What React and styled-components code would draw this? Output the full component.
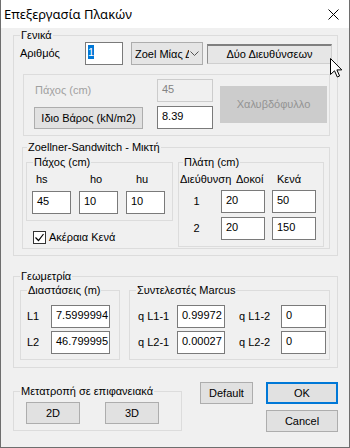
import React from 'react';
import styled, { createGlobalStyle } from 'styled-components';

const Global = createGlobalStyle`
  html, body { margin: 0; padding: 0; background: #fff; }
  * { box-sizing: border-box; }
`;

const Window = styled.div`
  position: relative;
  width: 350px;
  height: 448px;
  border: 1px solid #6e6e6e;
  border-top: none;
  background: #f0f0f0;
  display: flex;
  flex-direction: column;
  font: 11px 'Liberation Sans', Arial, sans-serif;
  color: #000;
`;

const TitleBar = styled.div`
  height: 28px;
  flex: none;
  background: #fff;
  display: flex;
  align-items: center;
  justify-content: space-between;
  padding: 0 10px 0 3px;
`;

const Title = styled.span`
  font: 13px 'Noto Sans', 'Open Sans', sans-serif;
`;

const Body = styled.div`
  display: flex;
  flex-direction: column;
  padding: 0 11px 0 12px;
`;

const Group = styled.fieldset`
  margin: ${(p) => p.$m || '0'};
  padding: ${(p) => p.$pad || '0'};
  min-width: 0;
  border: 1px solid #dcdcdc;
  width: ${(p) => (p.$w ? `${p.$w}px` : 'auto')};
`;

const Legend = styled.legend`
  margin-left: ${(p) => p.$ml ?? 6}px;
  padding: 0 1px;
  line-height: 13px;
  height: 13px;
  white-space: nowrap;
`;

const Frame = styled.div`
  margin: 9px 7px 0 9px;
  border: 1px solid #dcdcdc;
  padding: 4px 2px 6px 10px;
  display: flex;
  align-items: center;
  gap: 7px;
`;

const Row = styled.div`
  display: flex;
  align-items: center;
  gap: ${(p) => p.$gap || 0}px;
  padding-left: ${(p) => p.$pl || 0}px;
  height: ${(p) => p.$h || 23}px;
`;

const Label = styled.span`
  display: inline-block;
  width: ${(p) => (p.$w ? `${p.$w}px` : 'auto')};
  padding-left: ${(p) => p.$pl || 0}px;
  color: ${(p) => (p.$disabled ? '#a0a0a0' : '#000')};
  line-height: 13px;
  white-space: nowrap;
  text-align: ${(p) => p.$align || 'left'};
`;

const TextBox = styled.div`
  flex: none;
  width: ${(p) => p.$w}px;
  height: 23px;
  border: 1px solid ${(p) => (p.$disabled ? '#cccccc' : '#7a7a7a')};
  background: ${(p) => (p.$disabled ? '#f0f0f0' : '#fff')};
  color: ${(p) => (p.$disabled ? '#838383' : '#000')};
  padding: 3px 0 0 ${(p) => p.$pl ?? 4}px;
  line-height: 13px;
  white-space: nowrap;
  overflow: hidden;
`;

const Selected = styled.span`
  background: #0078d7;
  color: #fff;
  padding: 1px 0;
`;

const Button = styled.button`
  flex: none;
  width: ${(p) => p.$w}px;
  height: ${(p) => p.$h || 22}px;
  margin: 0;
  padding: 0;
  font: inherit;
  color: #000;
  background: #e1e1e1;
  border: 1px solid #adadad;
  border-radius: 0;
`;

const DefaultButton = styled(Button)`
  border: 2px solid #0078d7;
`;

const DisabledButton = styled(Button)`
  background: #cccccc;
  border-color: #cccccc;
  color: #939393;
`;

const ToggleButton = styled(Button)`
  background: #e6e6e6;
  border: 1px solid #cfcfcf;
  border-top: 2px solid #7f7f7f;
  border-left-color: #8f8f8f;
`;

const Combo = styled.div`
  flex: none;
  width: 72px;
  height: 23px;
  background: #e5e5e5;
  border: 1px solid #adadad;
  display: flex;
  align-items: center;
  padding: 0 3px 0 3px;
  gap: 1px;
  overflow: hidden;
  span {
    flex: 1;
    min-width: 0;
    white-space: nowrap;
    overflow: hidden;
  }
  svg {
    flex: none;
  }
`;

const SteelGrid = styled.div`
  display: grid;
  grid-template-columns: 123px 56px;
  grid-template-rows: 23px 23px;
  row-gap: 4px;
  align-items: center;
`;

const ZoellnerRow = styled.div`
  display: flex;
  align-items: flex-start;
  gap: 5px;
  padding: 2px 3px 1px 3px;
`;

const Column = styled.div`
  display: flex;
  flex-direction: column;
`;

const ThicknessGrid = styled.div`
  display: grid;
  grid-template-columns: repeat(3, 39px);
  grid-template-rows: 13px 23px;
  column-gap: 8px;
  row-gap: 5px;
  padding: 4px 0 6px 5px;
`;

const WidthGrid = styled.div`
  display: grid;
  grid-template-columns: 35px 44px 44px;
  grid-template-rows: 13px 23px 23px;
  column-gap: 7px;
  row-gap: 4px;
  align-items: center;
  padding: 4px 0 6px 0;
`;

const Check = styled.label`
  display: flex;
  align-items: center;
  gap: 3px;
  margin: 10px 0 0 7px;
  line-height: 13px;
`;

const Box = styled.span`
  width: 13px;
  height: 13px;
  border: 1px solid #333;
  background: #fff;
  display: flex;
`;

const GeoRow = styled.div`
  display: flex;
  align-items: flex-start;
  gap: 9px;
  padding: 1px 0 7px 6px;
`;

const PairGrid = styled.div`
  display: grid;
  grid-template-columns: ${(p) => p.$cols};
  grid-template-rows: 23px 23px;
  row-gap: 3px;
  align-items: center;
  padding: ${(p) => p.$pad};
`;

const BottomRow = styled.div`
  display: flex;
  align-items: flex-start;
  margin-top: 14px;
`;

const ConvertButtons = styled.div`
  display: flex;
  gap: 25px;
  padding: 4px 0 6px 12px;
`;

const ActionStack = styled.div`
  display: flex;
  flex-direction: column;
  gap: 6px;
`;

const Cursor = styled.svg`
  position: absolute;
  left: 329px;
  top: 58px;
`;

const Chevron = () => (
  <svg width="9" height="6" viewBox="0 0 9 6">
    <path d="M0.5 0.5 L4.5 4.5 L8.5 0.5" fill="none" stroke="#555" />
  </svg>
);

const App = () => (
  <>
    <Global />
    <Window>
      <TitleBar>
        <Title>Επεξεργασία Πλακών</Title>
        <svg width="11" height="11" viewBox="0 0 11 11">
          <path d="M0.5 0.5 L10.5 10.5 M10.5 0.5 L0.5 10.5" stroke="#000" strokeWidth="1" />
        </svg>
      </TitleBar>

      <Body>
        <Group $m="1px 0 0 0" $pad="0 0 6px 0">
          <Legend $ml={6}>Γενικά</Legend>
          <Row $pl={6}>
            <Label $w={65}>Αριθμός</Label>
            <TextBox $w={38} $pl={2}>
              <Selected>1</Selected>
            </TextBox>
            <Combo style={{ marginLeft: 8 }}>
              <span>Zoel Μίας Δ</span>
              <Chevron />
            </Combo>
            <ToggleButton $w={125} $h={20} style={{ marginLeft: 4 }}>
              Δύο Διευθύνσεων
            </ToggleButton>
          </Row>

          <Frame>
            <SteelGrid>
              <Label $pl={1} $disabled>Πάχος (cm)</Label>
              <TextBox $w={56} $disabled>45</TextBox>
              <Button $w={109}>Ιδιο Βάρος (kN/m2)</Button>
              <TextBox $w={56}>8.39</TextBox>
            </SteelGrid>
            <DisabledButton $w={107} $h={37}>Χαλυβδόφυλλο</DisabledButton>
          </Frame>

          <Group $m="5px 7px 0 8px">
            <Legend $ml={4}>Zoellner-Sandwitch - Μικτή</Legend>
            <ZoellnerRow>
              <Column>
                <Group $w={147}>
                  <Legend $ml={6}>Πάχος (cm)</Legend>
                  <ThicknessGrid>
                    <Label $pl={4}>hs</Label>
                    <Label $pl={11}>ho</Label>
                    <Label $pl={10}>hu</Label>
                    <TextBox $w={39}>45</TextBox>
                    <TextBox $w={39}>10</TextBox>
                    <TextBox $w={39}>10</TextBox>
                  </ThicknessGrid>
                </Group>
                <Check>
                  <Box>
                    <svg width="11" height="11" viewBox="0 0 11 11">
                      <path d="M1.5 5.5 L4.5 8.5 L9.5 2" fill="none" stroke="#000" strokeWidth="1.2" />
                    </svg>
                  </Box>
                  Ακέραια Κενά
                </Check>
              </Column>
              <Group $w={146}>
                <Legend $ml={4}>Πλάτη (cm)</Legend>
                <WidthGrid>
                  <Label $pl={1}>Διεύθυνση</Label>
                  <Label $pl={15}>Δοκοί</Label>
                  <Label $pl={5}>Κενά</Label>
                  <Label $align="center">1</Label>
                  <TextBox $w={44}>20</TextBox>
                  <TextBox $w={44}>50</TextBox>
                  <Label $align="center">2</Label>
                  <TextBox $w={44}>20</TextBox>
                  <TextBox $w={44}>150</TextBox>
                </WidthGrid>
              </Group>
            </ZoellnerRow>
          </Group>
        </Group>

        <Group $m="14px 0 0 0">
          <Legend $ml={6}>Γεωμετρία</Legend>
          <GeoRow>
            <Group $w={100}>
              <Legend $ml={6}>Διαστάσεις (m)</Legend>
              <PairGrid $cols="24px 59px" $pad="8px 0 5px 6px">
                <Label>L1</Label>
                <TextBox $w={59}>7.5999994</TextBox>
                <Label>L2</Label>
                <TextBox $w={59}>46.799995</TextBox>
              </PairGrid>
            </Group>
            <Group $w={201}>
              <Legend $ml={6}>Συντελεστές Marcus</Legend>
              <PairGrid $cols="39px 48px 56px 45px" $pad="8px 0 5px 8px">
                <Label>q L1-1</Label>
                <TextBox $w={48}>0.99972</TextBox>
                <Label $pl={14}>q L1-2</Label>
                <TextBox $w={45}>0</TextBox>
                <Label>q L2-1</Label>
                <TextBox $w={48}>0.00027</TextBox>
                <Label $pl={14}>q L2-2</Label>
                <TextBox $w={45}>0</TextBox>
              </PairGrid>
            </Group>
          </GeoRow>
        </Group>

        <BottomRow>
          <Group $w={169} $m="3px 0 0 0">
            <Legend $ml={6}>Μετατροπή σε επιφανειακά</Legend>
            <ConvertButtons>
              <Button $w={54}>2D</Button>
              <Button $w={54}>3D</Button>
            </ConvertButtons>
          </Group>
          <Button $w={53} style={{ marginLeft: 18 }}>Default</Button>
          <ActionStack style={{ marginLeft: 13 }}>
            <DefaultButton $w={72}>OK</DefaultButton>
            <Button $w={72}>Cancel</Button>
          </ActionStack>
        </BottomRow>
      </Body>

      <Cursor width="13" height="20" viewBox="0 0 13 20">
        <path
          d="M0.5 0.5 L0.5 16.5 L4.5 12.8 L7.3 19 L9.6 18 L6.9 11.9 L11.8 11.9 Z"
          fill="#fff"
          stroke="#000"
          strokeWidth="1"
        />
      </Cursor>
    </Window>
  </>
);

export default App;
